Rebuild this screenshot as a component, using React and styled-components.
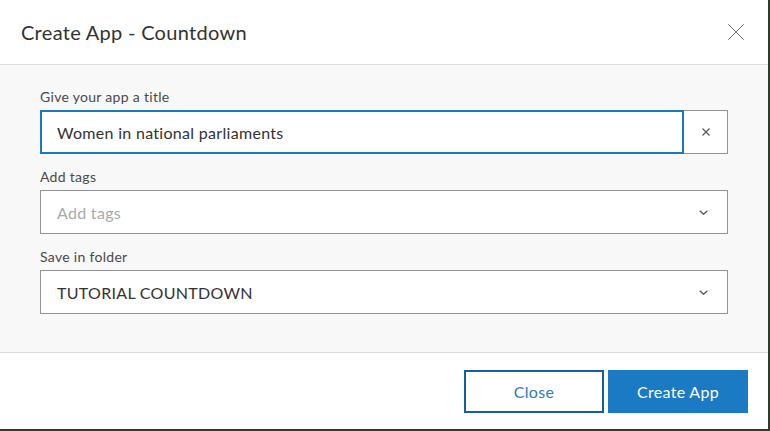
import React from "react";
import styled, { createGlobalStyle } from "styled-components";

const Global = createGlobalStyle`
  html, body { margin: 0; padding: 0; }
  body {
    background: #2d3a2c;
    width: 770px;
    height: 431px;
    overflow: hidden;
    font-family: Lato, "Noto Sans", "Liberation Sans", sans-serif;
    letter-spacing: 0.3px;
  }
`;

const Dialog = styled.div`
  width: 768px;
  height: 429px;
  background: #fff;
  display: flex;
  flex-direction: column;
  box-sizing: border-box;
`;

const Header = styled.div`
  height: 65px;
  box-sizing: border-box;
  display: flex;
  align-items: center;
  justify-content: space-between;
  padding: 0 24px 0 21px;
  border-bottom: 1px solid #dcdcdc;
`;

const Title = styled.h1`
  margin: 0;
  font-size: 20px;
  font-weight: 400;
  color: #323232;
  letter-spacing: 0.3px;
`;

const IconButton = styled.button`
  border: none;
  background: none;
  padding: 0;
  width: 16px;
  height: 16px;
  display: flex;
  align-items: center;
  justify-content: center;
  cursor: pointer;
`;

const Body = styled.div`
  background: #f8f8f8;
  padding: 22px 40px 38px 40px;
  display: flex;
  flex-direction: column;
  gap: 13px;
  border-bottom: 1px solid #dcdcdc;
`;

const Field = styled.div`
  display: flex;
  flex-direction: column;
  gap: 3px;
`;

const Label = styled.label`
  font-size: 14px;
  line-height: 20px;
  color: #4a4a4a;
`;

const InputRow = styled.div`
  display: flex;
  height: 44px;
`;

const Box = styled.div`
  flex: 1;
  box-sizing: border-box;
  height: 44px;
  background: #fff;
  border: ${(p) => (p.$focused ? "2px solid #1a77c0" : "1px solid #959595")};
  display: flex;
  align-items: center;
  justify-content: space-between;
  padding: 0 ${(p) => (p.$focused ? "15px" : "19px")} 0 ${(p) => (p.$focused ? "15px" : "16px")};
  font-size: 16px;
  color: ${(p) => (p.$placeholder ? "#a9a9a9" : "#323232")};
`;

const ClearButton = styled.div`
  width: 44px;
  height: 44px;
  box-sizing: border-box;
  background: #fff;
  border: 1px solid #959595;
  border-left: none;
  display: flex;
  align-items: center;
  justify-content: center;
`;

const Footer = styled.div`
  flex: 1;
  display: flex;
  justify-content: flex-end;
  align-items: flex-start;
  gap: 4px;
  padding: 17px 20px 0 0;
`;

const Button = styled.button`
  width: 140px;
  height: 43px;
  box-sizing: border-box;
  font-family: inherit;
  letter-spacing: 0.3px;
  font-size: 16px;
  cursor: pointer;
  border: 2px solid ${(p) => (p.$primary ? "#1a7ac4" : "#14609e")};
  background: ${(p) => (p.$primary ? "#1a7ac4" : "#fff")};
  color: ${(p) => (p.$primary ? "#fff" : "#2b7bba")};
`;

const XIcon = ({ size, color, w = 1 }) => (
  <svg width={size} height={size} viewBox="0 0 16 16">
    <path d="M0.5 0.5 L15.5 15.5 M15.5 0.5 L0.5 15.5" stroke={color} strokeWidth={w} fill="none" />
  </svg>
);

const Chevron = () => (
  <svg width="9" height="5" viewBox="0 0 9 5">
    <path d="M0.7 0.7 L4.5 4.3 L8.3 0.7" stroke="#555" strokeWidth="1.2" fill="none" />
  </svg>
);

export default function App() {
  return (
    <>
      <Global />
      <Dialog>
        <Header>
          <Title>Create App - Countdown</Title>
          <IconButton aria-label="close">
            <XIcon size={16} color="#6b6b6b" />
          </IconButton>
        </Header>
        <Body>
          <Field>
            <Label>Give your app a title</Label>
            <InputRow>
              <Box $focused>Women in national parliaments</Box>
              <ClearButton>
                <svg width="8" height="8" viewBox="0 0 8 8">
                  <path d="M0.5 0.5 L7.5 7.5 M7.5 0.5 L0.5 7.5" stroke="#555" strokeWidth="1.1" fill="none" />
                </svg>
              </ClearButton>
            </InputRow>
          </Field>
          <Field>
            <Label>Add tags</Label>
            <InputRow>
              <Box $placeholder>
                Add tags
                <Chevron />
              </Box>
            </InputRow>
          </Field>
          <Field>
            <Label>Save in folder</Label>
            <InputRow>
              <Box>
                TUTORIAL COUNTDOWN
                <Chevron />
              </Box>
            </InputRow>
          </Field>
        </Body>
        <Footer>
          <Button>Close</Button>
          <Button $primary>Create App</Button>
        </Footer>
      </Dialog>
    </>
  );
}
